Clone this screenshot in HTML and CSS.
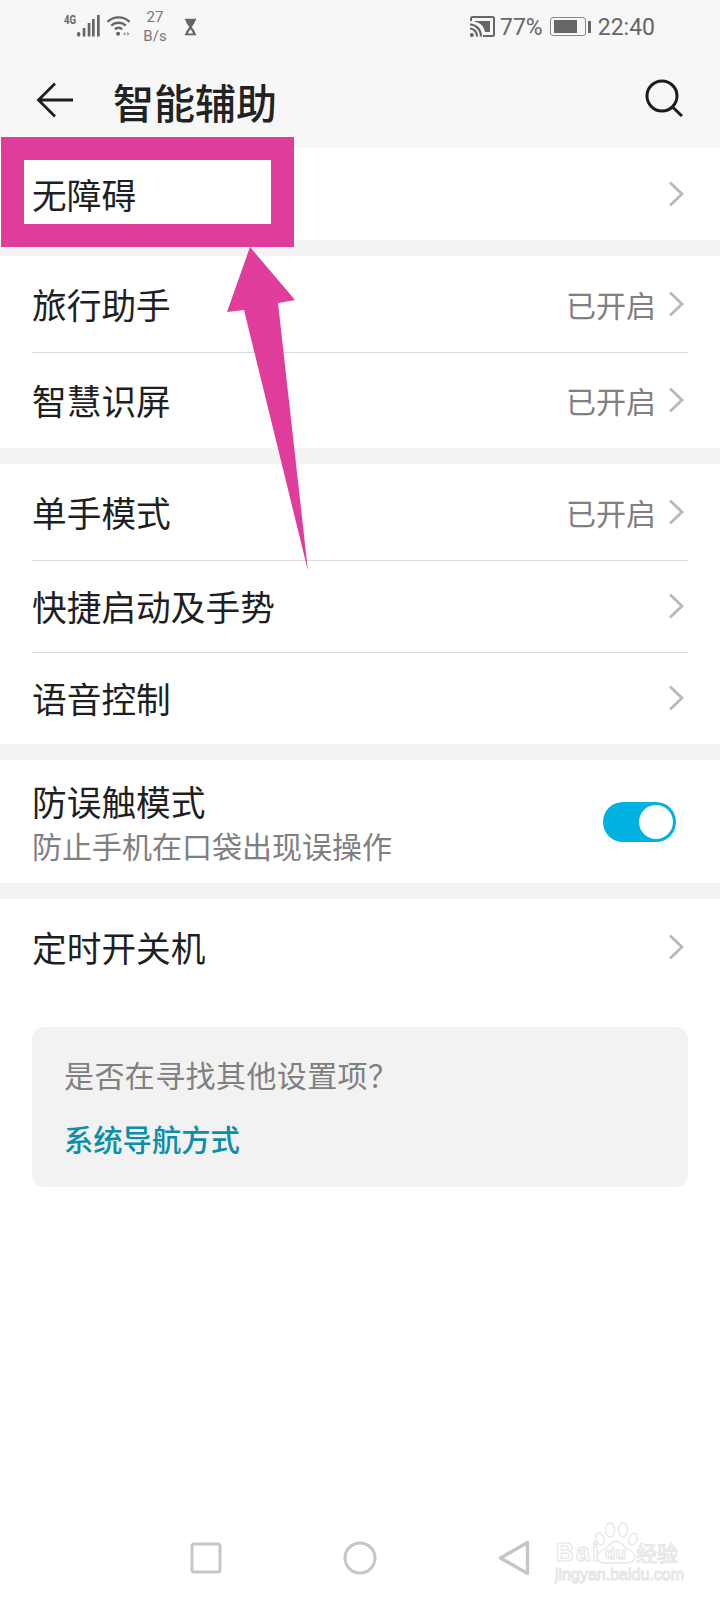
FILE: index.html
```html
<!DOCTYPE html>
<html lang="zh-CN">
<head>
    <meta charset="UTF-8">
    <meta name="viewport" content="width=device-width, initial-scale=1.0">
    <title>智能辅助</title>
    <link rel="stylesheet" href="styles.css">
</head>
<body>
    <div class="phone">
        <div class="status">
            <div class="status-left">
                <span class="net">4G</span>
                <svg class="signal" width="23" height="22" viewBox="0 0 23 22">
                    <rect x="0" y="17" width="3.300" height="4.500" rx="1.500"/>
                    <rect x="5.700" y="13" width="2.700" height="8.500"/>
                    <rect x="10.700" y="8" width="2.700" height="13.500"/>
                    <rect x="15" y="4" width="2.700" height="17.500"/>
                    <rect x="20" y="0" width="2.700" height="21.500"/>
                </svg>
                <svg class="wifi" width="26" height="22" viewBox="0 0 28 24" fill="none" stroke="#666" stroke-width="2.600">
                    <path d="M1.500 7.500C8 1 19 1 25.500 7.500"/>
                    <path d="M5.500 11.500C10 7.500 17 7.500 21.500 11.500"/>
                    <path d="M9.500 15.500C12 13.500 15 13.500 17.500 15.500"/>
                    <circle cx="13" cy="20.500" r="2.200" fill="#666" stroke="none"/>
                    <path d="M21 18.500l-2.500 2 2.500 2zM23 18.500l2.500 2-2.500 2z" fill="#888" stroke="none"/>
                </svg>
                <div class="speed"><span>27</span><span>B/s</span></div>
                <svg class="hourglass" width="13" height="18" viewBox="0 0 14 18">
                    <path d="M1 0h12v2h-1c0 3-2.500 5-3.700 7 1.200 2 3.700 4 3.700 7h1v2H1v-2h1c0-3 2.500-5 3.700-7C4.500 7 2 5 2 2H1z" fill="#666"/>
                    <path d="M7 11.500c-1 1.300-2.200 2.500-2.600 4.500h5.200c-.4-2-1.600-3.200-2.600-4.500z" fill="#f7f7f7"/>
                </svg>
            </div>
            <div class="status-right">
                <svg class="cast" width="25" height="21" viewBox="0 0 25 21" fill="none" stroke="#666">
                    <path d="M1 5V2.500C1 1.600 1.600 1 2.500 1h20c.9 0 1.500.6 1.500 1.500v16c0 .9-.6 1.500-1.500 1.500H13" stroke-width="2"/>
                    <path d="M5 5h15v11h-5C14 10 10 6.500 5 6z" fill="#666" stroke="none"/>
                    <path d="M0 8.500c6 0 11 5 11 12M0 12.500c4 0 7 3.500 7 8" stroke-width="2.200"/>
                    <circle cx="1.800" cy="19" r="2" fill="#666" stroke="none"/>
                </svg>
                <span class="pct">77%</span>
                <div class="battery"><div class="battery-fill"></div></div>
                <div class="battery-nub"></div>
                <span class="clock">22:40</span>
            </div>
        </div>

        <div class="topbar">
            <svg class="back" width="38" height="36" viewBox="0 0 38 36" fill="none" stroke="#1c1c1c" stroke-width="2.800">
                <path d="M37 18H2M19 1.500L2.500 18 19 34.500"/>
            </svg>
            <div class="title">智能辅助</div>
            <svg class="search" width="38" height="38" viewBox="0 0 38 38" fill="none" stroke="#1c1c1c" stroke-width="3">
                <circle cx="17" cy="17" r="15"/>
                <path d="M27.500 28L37 37"/>
            </svg>
        </div>

        <div class="group">
            <div class="row row-short">
                <span class="row-name">无障碍</span>
                <svg class="chev" width="16" height="26" viewBox="0 0 16 26"><path d="M2 1.500l12 11.500L2 24.500"/></svg>
            </div>
        </div>

        <div class="group">
            <div class="row">
                <span class="row-name">旅行助手</span>
                <span class="row-val">已开启</span>
                <svg class="chev" width="16" height="26" viewBox="0 0 16 26"><path d="M2 1.500l12 11.500L2 24.500"/></svg>
            </div>
            <div class="row line">
                <span class="row-name">智慧识屏</span>
                <span class="row-val">已开启</span>
                <svg class="chev" width="16" height="26" viewBox="0 0 16 26"><path d="M2 1.500l12 11.500L2 24.500"/></svg>
            </div>
        </div>

        <div class="group">
            <div class="row">
                <span class="row-name">单手模式</span>
                <span class="row-val">已开启</span>
                <svg class="chev" width="16" height="26" viewBox="0 0 16 26"><path d="M2 1.500l12 11.500L2 24.500"/></svg>
            </div>
            <div class="row row-short line">
                <span class="row-name">快捷启动及手势</span>
                <svg class="chev" width="16" height="26" viewBox="0 0 16 26"><path d="M2 1.500l12 11.500L2 24.500"/></svg>
            </div>
            <div class="row row-short line">
                <span class="row-name">语音控制</span>
                <svg class="chev" width="16" height="26" viewBox="0 0 16 26"><path d="M2 1.500l12 11.500L2 24.500"/></svg>
            </div>
        </div>

        <div class="group">
            <div class="row row-tall">
                <div class="row-text">
                    <div class="row-name">防误触模式</div>
                    <div class="row-sub">防止手机在口袋出现误操作</div>
                </div>
                <div class="toggle"><div class="knob"></div></div>
            </div>
        </div>

        <div class="group group-last">
            <div class="row">
                <span class="row-name">定时开关机</span>
                <svg class="chev" width="16" height="26" viewBox="0 0 16 26"><path d="M2 1.500l12 11.500L2 24.500"/></svg>
            </div>
        </div>

        <div class="hint">
            <div class="hint-q">是否在寻找其他设置项？</div>
            <div class="hint-link">系统导航方式</div>
        </div>

        <div class="nav">
            <svg width="32" height="32" viewBox="0 0 32 32" fill="none" stroke="#c6c6c6" stroke-width="3"><rect x="2" y="2" width="28" height="28" rx="2"/></svg>
            <svg width="34" height="34" viewBox="0 0 34 34" fill="none" stroke="#c6c6c6" stroke-width="3"><circle cx="17" cy="17" r="15"/></svg>
            <svg width="32" height="36" viewBox="0 0 32 36" fill="none" stroke="#c6c6c6" stroke-width="3.400" stroke-linejoin="round"><path d="M29.500 2.500v31L2.500 18z"/></svg>
        </div>

        <!-- 标注 -->
        <div class="mark-box"></div>
        <svg class="mark-arrow" width="90" height="340" viewBox="0 0 90 340">
            <path d="M26 2L71 55 54 58 84 326 20 65 3 67z" fill="#e03c9c"/>
        </svg>

        <div class="watermark">
            <svg class="paw" width="46" height="43" viewBox="0 0 46 43" fill="none" stroke="#e6e6e6" stroke-width="1.300">
                <ellipse cx="8" cy="17" rx="4" ry="6" transform="rotate(-20 8 17)"/>
                <ellipse cx="18" cy="8" rx="4.500" ry="7"/>
                <ellipse cx="31" cy="8" rx="4.500" ry="7"/>
                <ellipse cx="41" cy="17" rx="4" ry="6" transform="rotate(20 41 17)"/>
                <path d="M24 19c-5 0-8 7-13 9-7 3-9 13 3 13h20c12 0 10-10 3-13-5-2-8-9-13-9z"/>
            </svg>
            <span class="wm-bai">Bai</span>
            <span class="wm-du">du</span>
            <span class="wm-jy">经验</span>
            <span class="wm-url">jingyan.baidu.com</span>
        </div>
    </div>
</body>
</html>
```

FILE: styles.css
```css
* {
    margin: 0;
    padding: 0;
    box-sizing: border-box;
}
body {
    background-color: #fff;
    font-family: "Noto Sans CJK SC", "Noto Sans", sans-serif;
    color: #1f1f1f;
}
.phone {
    width: 720px;
    height: 1600px;
    position: relative;
    overflow: hidden;
    display: flex;
    flex-direction: column;
}

/* status bar */
.status {
    height: 54px;
    background-color: #f7f7f7;
    display: flex;
    justify-content: space-between;
    align-items: center;
    padding: 0 65px 1px 64px;
    color: #666;
    font-family: Roboto, "Noto Sans", sans-serif;
}
.status-left, .status-right {
    display: flex;
    align-items: center;
}
.net {
    width: 13px;
    font-size: 12px;
    font-weight: 700;
    line-height: 10px;
    margin-top: -14px;
    transform: scaleX(0.8);
    transform-origin: left;
}
.signal {
    fill: #666;
    margin-top: -2px;
}
.wifi {
    margin-left: 6px;
    margin-top: -2px;
}
.speed {
    width: 34px;
    margin-left: 6px;
    display: flex;
    flex-direction: column;
    align-items: center;
    font-size: 15px;
    line-height: 19px;
    color: #777;
}
.hourglass {
    margin-left: 12px;
}
.pct, .clock {
    font-size: 23px;
    line-height: 28px;
    margin-top: 2px;
}
.pct {
    margin-left: 5px;
}
.battery {
    width: 36px;
    height: 19px;
    margin-left: 7px;
    border: 1px solid #888;
    border-radius: 3px;
    padding: 2px 8px 2px 3px;
}
.battery-fill {
    height: 100%;
    background-color: #666;
}
.battery-nub {
    width: 3px;
    height: 12px;
    margin-left: 2px;
    background-color: #666;
}
.clock {
    margin-left: 7px;
}

/* header */
.topbar {
    height: 94px;
    background-color: #f7f7f7;
    display: flex;
    align-items: center;
    padding: 0 37px 0 36px;
}
.back {
    margin-top: -2px;
}
.title {
    flex: 1;
    margin-left: 39px;
    font-size: 41px;
    line-height: 56px;
    font-weight: 500;
    color: #222;
}
.search {
    margin-top: -6px;
}

/* list */
.group {
    background-color: #fff;
    border-bottom: 16px solid #f3f3f3;
}
.group-last {
    border-bottom: 0;
}
.row {
    height: 96px;
    margin: 0 32px;
    display: flex;
    align-items: center;
}
.row-short {
    height: 92px;
}
.line {
    padding-bottom: 2px;
    border-top: 1px solid #dcdcdc;
}
.row-name {
    font-size: 34.700px;
    line-height: 44px;
}
span.row-name {
    flex: 1;
}
.row-val {
    font-size: 30px;
    line-height: 40px;
    color: #808080;
    margin-right: 12px;
}
.chev {
    margin-right: 4px;
    fill: none;
    stroke: #b8b8b8;
    stroke-width: 2.8;
}
.row-tall {
    height: 123px;
}
.row-text {
    flex: 1;
}
.row-sub {
    margin-top: 2px;
    font-size: 30px;
    line-height: 40px;
    color: #808080;
}
.toggle {
    width: 73px;
    height: 40px;
    margin-right: 12px;
    padding: 3px 3px 3px 36px;
    border-radius: 20px;
    background-color: #00b1e1;
}
.knob {
    width: 34px;
    height: 34px;
    border-radius: 50%;
    background-color: #fff;
}

/* hint card */
.hint {
    height: 160px;
    margin: 32px 32px 0;
    padding: 25px 32px;
    border-radius: 12px;
    background-color: #f2f2f2;
}
.hint-q {
    font-size: 30px;
    line-height: 44px;
    letter-spacing: 0.4px;
    color: #808080;
}
.hint-link {
    margin-top: 20px;
    font-size: 29.300px;
    line-height: 44px;
    font-weight: 500;
    color: #0b8ea8;
}

/* navigation */
.nav {
    margin-top: auto;
    height: 84px;
    padding: 0 190px;
    display: flex;
    justify-content: space-between;
    align-items: center;
}

/* annotation on top */
.mark-box {
    width: 293px;
    height: 110px;
    position: absolute;
    left: 1px;
    top: 137px;
    border: 23px solid #e03c9c;
}
.mark-arrow {
    position: absolute;
    left: 224px;
    top: 245px;
}

/* watermark */
.watermark {
    width: 130px;
    height: 62px;
    position: absolute;
    left: 553px;
    top: 1523px;
    color: transparent;
    font-family: "Liberation Sans", sans-serif;
    white-space: nowrap;
}
.watermark span {
    position: absolute;
    -webkit-text-stroke: 1px #e4e4e4;
}
.paw {
    position: absolute;
    left: 39px;
    top: -1px;
}
.wm-bai {
    left: 3px;
    top: 15px;
    font-size: 25px;
    line-height: 28px;
    font-weight: 700;
    letter-spacing: 2px;
}
.wm-du {
    left: 52px;
    top: 22px;
    font-size: 17px;
    line-height: 18px;
    font-weight: 700;
}
.wm-jy {
    left: 83px;
    top: 15px;
    font-family: "Noto Sans CJK SC", sans-serif;
    font-size: 21px;
    line-height: 28px;
}
.wm-url {
    left: 2px;
    top: 43px;
    font-size: 16px;
    line-height: 18px;
}
```
